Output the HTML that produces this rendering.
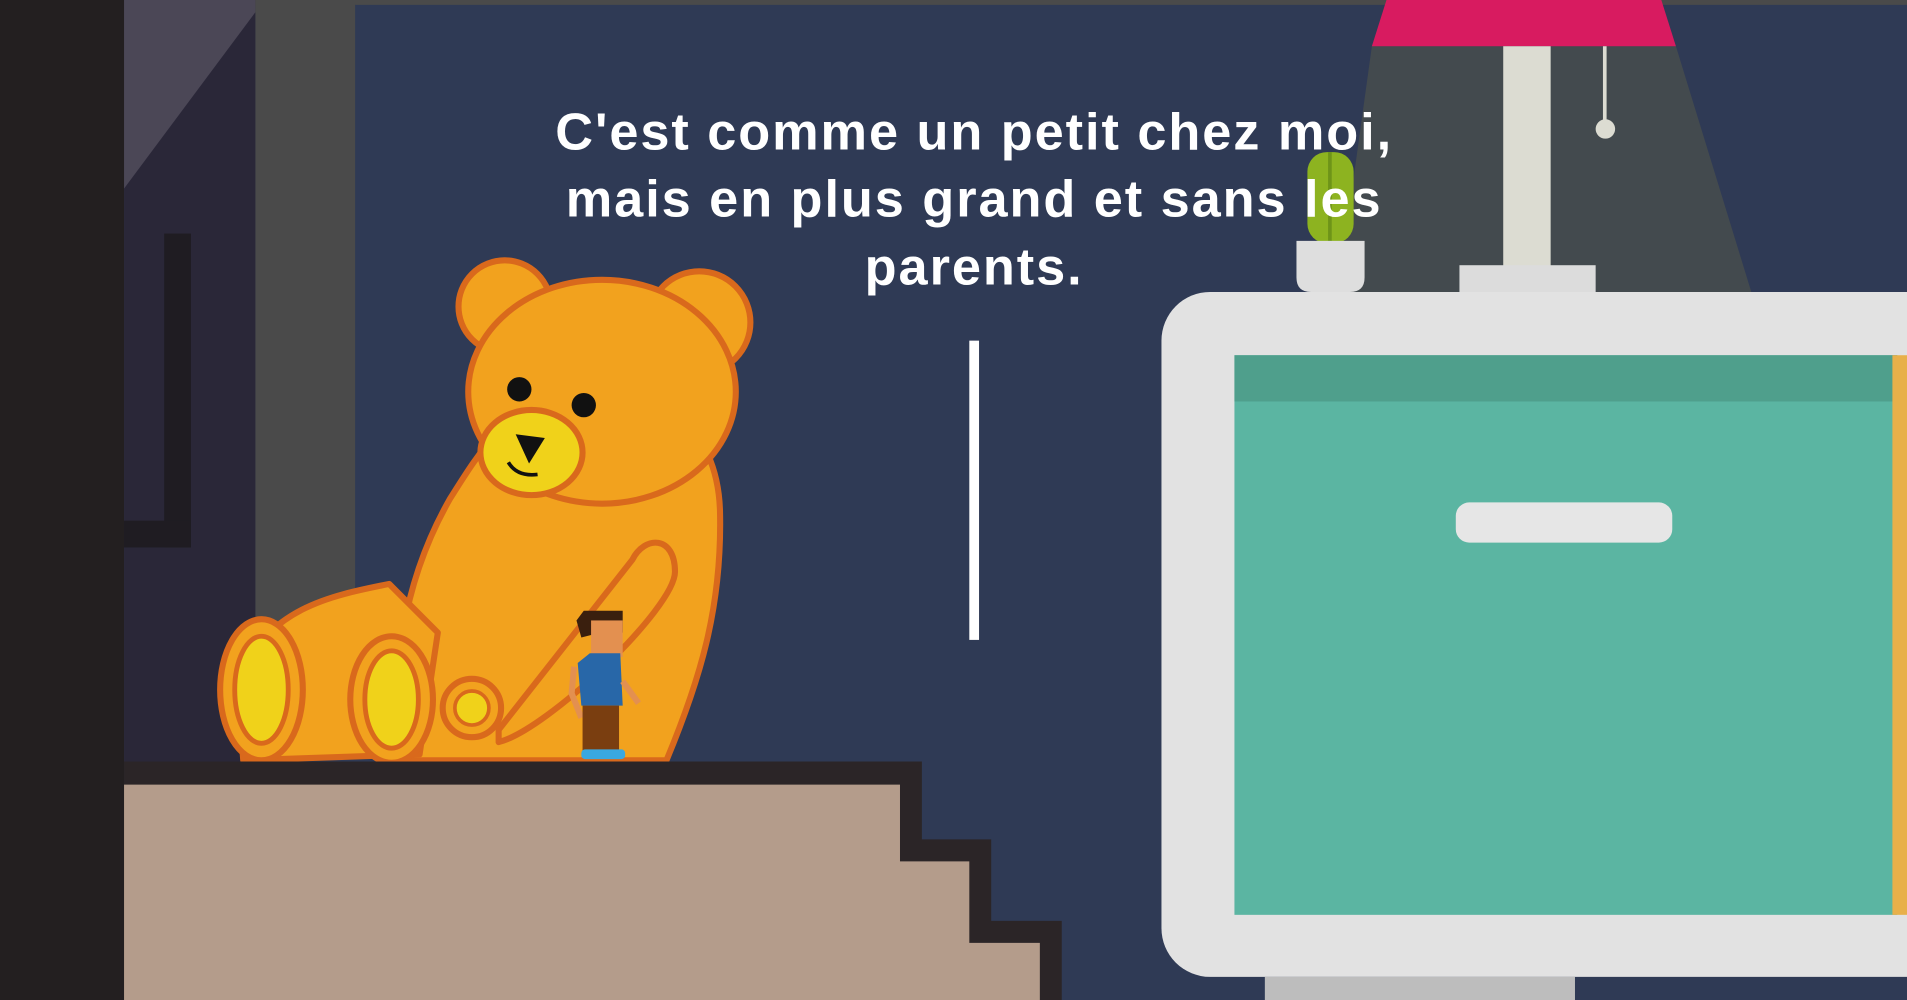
<!DOCTYPE html>
<html><head><meta charset="utf-8"><style>
html,body{margin:0;padding:0;background:#2e3a55;overflow:hidden}
svg{display:block}
</style></head><body>
<svg width="1907" height="1000" viewBox="0 0 1568 822" preserveAspectRatio="none" xmlns="http://www.w3.org/2000/svg">
<rect x="0" y="0" width="1568" height="822" fill="#2f3a55"/>
<rect x="0" y="0" width="1568" height="4" fill="#4a4a4a"/>
<rect x="0" y="0" width="102" height="822" fill="#231f20"/>
<rect x="102" y="0" width="108" height="822" fill="#2a2738"/>
<polygon points="102,0 210,0 210,10 102,155" fill="#4b4756"/>
<rect x="135" y="192" width="22" height="258" fill="#1f1c22"/>
<rect x="102" y="428" width="55" height="22" fill="#1f1c22"/>
<rect x="210" y="0" width="82" height="520" fill="#4a4a4a"/>
<!-- lamp -->
<polygon points="1128,38 1378,38 1440,240 1100,240" fill="#434a4e"/>
<polygon points="1140,0 1366,0 1378,38 1128,38" fill="#d81b60"/>
<rect x="1236" y="38" width="39" height="184" fill="#dcdcd2"/>
<rect x="1200" y="218" width="112" height="24" fill="#dcdcdc"/>
<rect x="1318" y="38" width="3" height="62" fill="#dcdcd2"/>
<circle cx="1320" cy="106" r="8" fill="#dcdcd2"/>
<!-- cactus -->
<rect x="1075" y="125" width="38" height="75" rx="16" fill="#8db320"/>
<rect x="1092" y="125" width="3" height="75" fill="#6e9418"/>
<path d="M1066 198 H1122 V228 Q1122 240 1110 240 H1078 Q1066 240 1066 228Z" fill="#dedede"/>
<!-- dresser -->
<rect x="955" y="240" width="680" height="563" rx="40" fill="#e2e2e2"/>
<rect x="1015" y="292" width="545" height="460" fill="#5bb5a2"/>
<rect x="1015" y="292" width="545" height="38" fill="#4f9f8c"/>
<rect x="1556" y="292" width="12" height="460" fill="#e8b04a"/>
<rect x="1197" y="413" width="178" height="33" rx="11" fill="#e6e6e6"/>
<rect x="1040" y="803" width="255" height="19" fill="#bdbdbd"/>
<rect x="797" y="280" width="8" height="246" fill="#ffffff"/>
<!-- bear -->
<g stroke="#d9691c" stroke-width="5" stroke-linejoin="round">
<path d="M330 625 C320 560 330 480 370 410 C395 370 420 330 470 320 C540 310 590 350 592 420 C594 500 575 560 548 625 Z" fill="#f2a21e"/>
<path d="M195 560 C220 500 270 490 320 480 L360 520 L345 620 L200 625 Z" fill="#f2a21e"/>
<circle cx="415" cy="252" r="38" fill="#f2a21e"/>
<circle cx="575" cy="265" r="42" fill="#f2a21e"/>
<ellipse cx="495" cy="322" rx="110" ry="92" fill="#f2a21e"/>
<ellipse cx="215" cy="567" rx="34" ry="58" fill="#f2a21e"/>
<ellipse cx="215" cy="567" rx="22" ry="44" fill="#f0d21a" stroke-width="4"/>
<ellipse cx="322" cy="575" rx="34" ry="52" fill="#f2a21e"/>
<ellipse cx="322" cy="575" rx="22" ry="40" fill="#f0d21a" stroke-width="4"/>
<path d="M410 600 L520 460 C530 440 555 440 555 470 C555 500 450 600 410 610 Z" fill="#f2a21e"/>
<circle cx="388" cy="582" r="24" fill="#f2a21e"/>
<circle cx="388" cy="582" r="14" fill="#f0d21a" stroke-width="3"/>
<ellipse cx="437" cy="372" rx="42" ry="35" fill="#f0d21a"/>
</g>
<circle cx="427" cy="320" r="10" fill="#111"/>
<circle cx="480" cy="333" r="10" fill="#111"/>
<polygon points="424,357 448,360 435,381" fill="#111"/>
<path d="M418 380 Q425 392 442 390" stroke="#111" stroke-width="3" fill="none"/>
<!-- boy -->
<path d="M474 510 L480 502 L512 502 L512 520 L486 522 L478 524 Z" fill="#3a1f0e"/>
<rect x="486" y="510" width="26" height="30" fill="#e39050"/>
<path d="M475 545 L485 537 L510 537 L512 580 L478 580 Z" fill="#2867a8"/>
<path d="M472 548 L470 570 L478 590" stroke="#e39050" stroke-width="5" fill="none"/>
<path d="M512 560 L525 578" stroke="#e39050" stroke-width="5" fill="none"/>
<rect x="479" y="580" width="30" height="38" fill="#7a3e10"/>
<rect x="478" y="616" width="36" height="8" rx="3" fill="#3aa8e0"/>
<!-- ground/stairs -->
<polygon points="102,626 758,626 758,690 815,690 815,757 873,757 873,822 102,822" fill="#2b2527"/>
<polygon points="102,645 740,645 740,708 797,708 797,775 855,775 855,822 102,822" fill="#b49c8b"/>
<!-- text -->
<g font-family="'Liberation Sans', Arial, sans-serif" font-weight="bold" font-size="43" letter-spacing="1.6" fill="#ffffff" text-anchor="middle">
<text x="801" y="123">C'est comme un petit chez moi,</text>
<text x="801" y="178">mais en plus grand et sans les</text>
<text x="801" y="234">parents.</text>
</g>
</svg>
</body></html>
